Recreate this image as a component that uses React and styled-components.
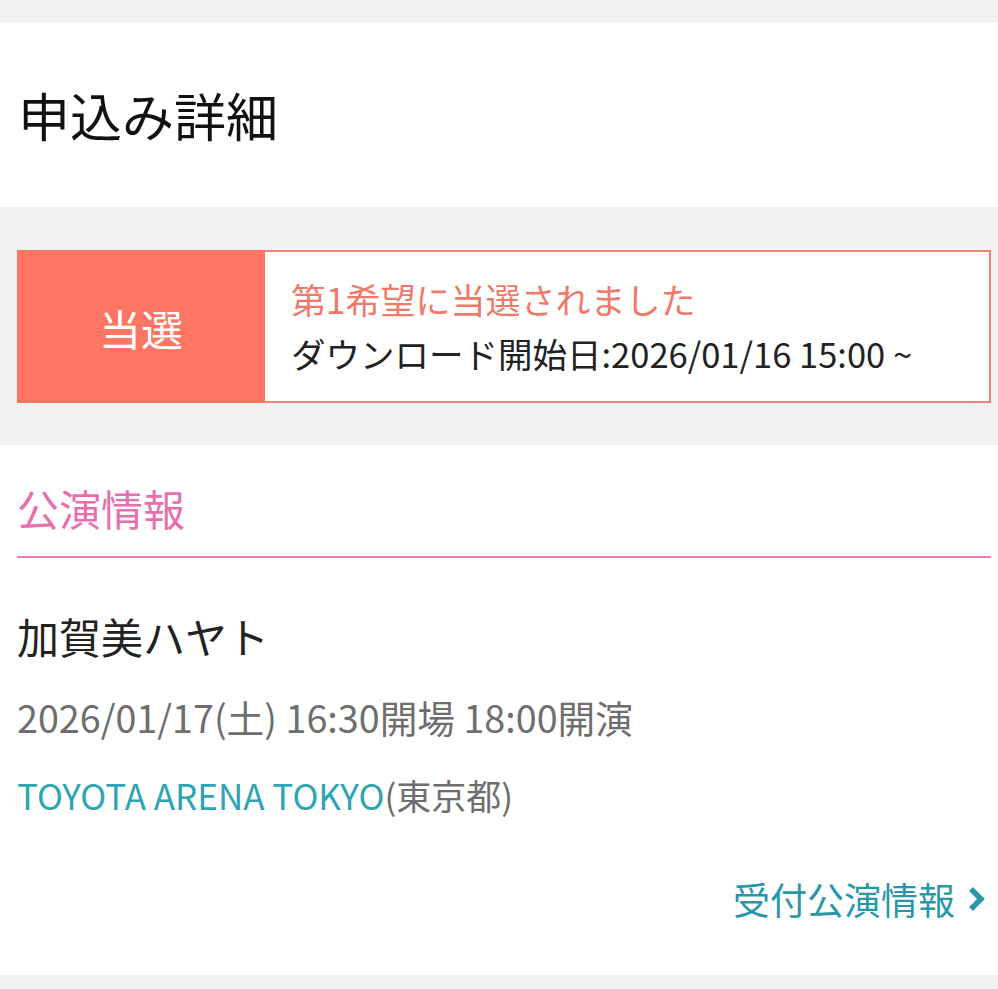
import React from "react";
import styled, { createGlobalStyle } from "styled-components";

const GlobalStyle = createGlobalStyle`
  html, body {
    margin: 0;
    padding: 0;
    background: #f2f2f2;
  }
  body {
    font-family: "Noto Sans CJK JP", "Noto Sans", sans-serif;
    color: #222222;
  }
`;

const Page = styled.div`
  width: 998px;
  height: 989px;
  overflow: hidden;
  background: #f2f2f2;
  padding-top: 22px;
  box-sizing: border-box;
`;

const Header = styled.header`
  background: #ffffff;
  height: 185px;
  display: flex;
  align-items: center;
  padding: 0 18px;
  box-sizing: border-box;

  h1 {
    margin: 0;
    font-size: 52px;
    font-weight: 400;
    color: #111111;
  }
`;

const StatusArea = styled.section`
  padding: 43px 7px 42px 17px;
`;

const StatusBox = styled.div`
  display: flex;
  height: 153px;
  border: 2px solid #f08576;
  box-sizing: border-box;
  background: #ffffff;
`;

const Badge = styled.div`
  width: 248px;
  background: #ff7563;
  color: #ffffff;
  display: flex;
  align-items: center;
  justify-content: center;
  font-size: 42px;
  margin: -2px 0 -2px -2px;
  padding-top: 2px;
`;

const StatusText = styled.div`
  flex: 1;
  display: flex;
  flex-direction: column;
  justify-content: center;
  padding-left: 26px;
  padding-bottom: 2px;
`;

const Line = styled.p`
  margin: 0;
  font-size: ${(p) => p.size || 35}px;
  line-height: 54px;
  color: ${(p) => p.color || "#222222"};
`;

const InfoCard = styled.section`
  background: #ffffff;
  height: 530px;
  padding: 0 7px 0 17px;
`;

const SectionTitle = styled.h2`
  margin: 0;
  height: 113px;
  display: flex;
  align-items: center;
  font-size: 42px;
  font-weight: 400;
  color: #e86fae;
  border-bottom: 2px solid #e97ab8;
  box-sizing: border-box;
  padding-top: 14px;
`;

const Artist = styled.h3`
  margin: 0;
  padding-top: 46px;
  font-size: 42px;
  line-height: 64px;
  font-weight: 400;
  color: #222222;
`;

const Meta = styled.p`
  margin: 0;
  padding-top: ${(p) => p.gap || 0}px;
  font-size: ${(p) => p.size || 35}px;
  line-height: 50px;
  color: #6e6e6e;
`;

const Venue = styled.span`
  color: #2fa4b3;
`;

const LinkRow = styled.div`
  display: flex;
  justify-content: flex-end;
  padding-top: 52px;
  padding-right: 4px;
`;

const MoreLink = styled.a`
  display: flex;
  align-items: center;
  gap: 12px;
  font-size: 37px;
  color: #2a97a9;
  text-decoration: none;
`;

const Chevron = () => (
  <svg width="20" height="28" viewBox="0 0 20 28">
    <path d="M4 4 L14 14 L4 24" stroke="#2a97a9" strokeWidth="5.5" fill="none" />
  </svg>
);

export default function App() {
  return (
    <>
      <GlobalStyle />
      <Page>
        <Header>
          <h1>申込み詳細</h1>
        </Header>
        <StatusArea>
          <StatusBox>
            <Badge>当選</Badge>
            <StatusText>
              <Line color="#f07a6a">第1希望に当選されました</Line>
              <Line size={34.5}>ダウンロード開始日:2026/01/16 15:00 ~</Line>
            </StatusText>
          </StatusBox>
        </StatusArea>
        <InfoCard>
          <SectionTitle>公演情報</SectionTitle>
          <Artist>加賀美ハヤト</Artist>
          <Meta gap={24} size={37.7}>2026/01/17(土) 16:30開場 18:00開演</Meta>
          <Meta gap={28}>
            <Venue>TOYOTA ARENA TOKYO</Venue>(東京都)
          </Meta>
          <LinkRow>
            <MoreLink href="#">
              受付公演情報
              <Chevron />
            </MoreLink>
          </LinkRow>
        </InfoCard>
      </Page>
    </>
  );
}
